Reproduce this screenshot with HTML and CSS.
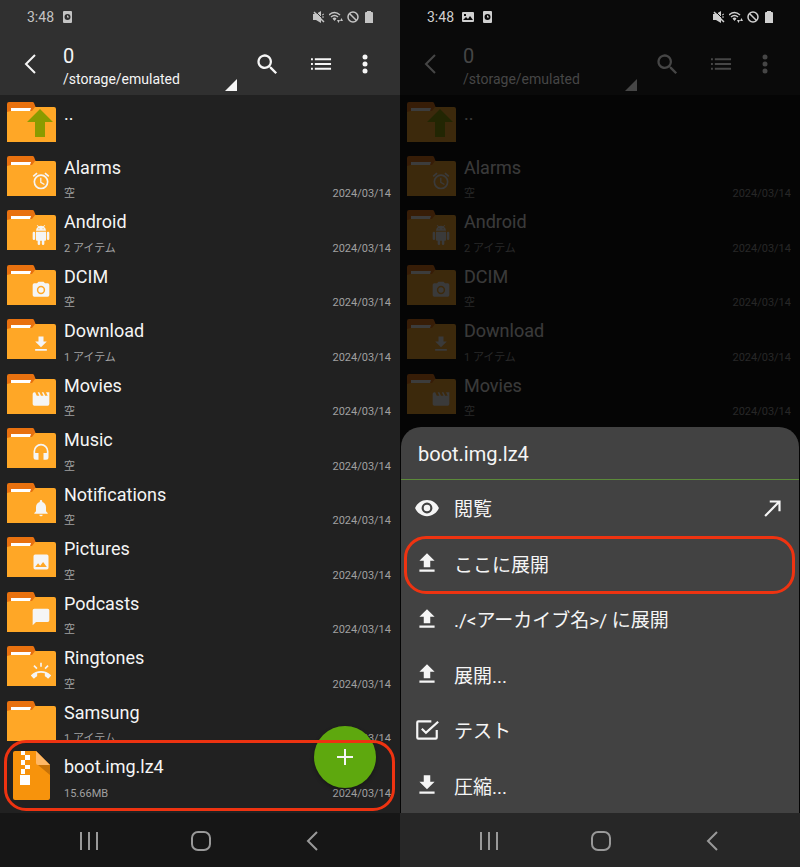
FILE: index.html
```html
<!DOCTYPE html>
<html lang="ja">
<head>
  <meta charset="UTF-8">
  <meta name="viewport" content="width=device-width, initial-scale=1.0">
  <title>boot.img.lz4</title>
  <link rel="stylesheet" href="styles.css">
</head>
<body>
  <!-- shared icons -->
  <svg class="sprite" aria-hidden="true">
    <symbol id="folder" viewBox="0 0 49 40">
      <path fill="#e8710f" d="M2 0h23a2 2 0 0 1 2 1l2 5v8H0V2a2 2 0 0 1 2-2z"/>
      <path fill="#ffa726" d="M0 10l4-1h21l3-4h19a2 2 0 0 1 2 2v33H0z"/>
      <path fill="#fff" d="M4 6h20l-1 3H4z"/>
    </symbol>
    <symbol id="zip" viewBox="0 0 37 49">
      <path fill="#f7930c" d="M2 0h21l14 14v33a2 2 0 0 1-2 2H2a2 2 0 0 1-2-2V2a2 2 0 0 1 2-2z"/>
      <path fill="#ffb866" d="M23 0l14 14H25a2 2 0 0 1-2-2z"/>
      <path fill="#c87308" d="M25 14h12v10z"/>
      <path fill="#fff" d="M8 0h4v4H8zM12 4h5v5h-5zM8 9h4v5H8zM12 14h5v4h-5zM8 18h4v5H8zM7 24h10v10H7z"/>
    </symbol>
    <symbol id="up" viewBox="0 0 26 28"><path fill="#8b9b00" d="M13 0l13 13h-8v15H8V13H0z"/></symbol>
    <symbol id="alarm" viewBox="0 0 24 24"><path d="M22 5.700l-4.600-3.900-1.300 1.500 4.600 3.900L22 5.700zM7.900 3.400L6.600 1.900 2 5.700l1.300 1.500 4.600-3.800zM12.500 8H11v6l4.700 2.900.8-1.200-4-2.400V8zM12 4a9 9 0 1 0 0 18 9 9 0 0 0 0-18zm0 16a7 7 0 1 1 0-14 7 7 0 0 1 0 14z"/></symbol>
    <symbol id="android" viewBox="0 0 24 24"><path d="M6 18c0 .55.450 1 1 1h1v3.500a1.500 1.500 0 0 0 3 0V19h2v3.500a1.500 1.500 0 0 0 3 0V19h1c.55 0 1-.45 1-1V8H6v10zM3.500 8A1.500 1.500 0 0 0 2 9.500v7a1.500 1.500 0 0 0 3 0v-7A1.500 1.500 0 0 0 3.500 8zm17 0A1.500 1.500 0 0 0 19 9.500v7a1.500 1.500 0 0 0 3 0v-7A1.500 1.500 0 0 0 20.500 8zm-4.970-5.840l1.300-1.300a.5.5 0 0 0-.7-.7l-1.480 1.480A5.900 5.900 0 0 0 12 1c-.96 0-1.860.23-2.660.63L7.850.15a.5.5 0 0 0-.7.7l1.310 1.310A6 6 0 0 0 6 7h12a6 6 0 0 0-2.470-4.840zM10 5H9V4h1v1zm5 0h-1V4h1v1z"/></symbol>
    <symbol id="camera" viewBox="0 0 24 24"><circle cx="12" cy="12" r="3.200"/><path d="M9 2L7.170 4H4a2 2 0 0 0-2 2v12a2 2 0 0 0 2 2h16a2 2 0 0 0 2-2V6a2 2 0 0 0-2-2h-3.170L15 2H9zm3 15a5 5 0 1 1 0-10 5 5 0 0 1 0 10z"/></symbol>
    <symbol id="download" viewBox="0 0 24 24"><path d="M19 9h-4V3H9v6H5l7 7 7-7zM5 18v2h14v-2H5z"/></symbol>
    <symbol id="upload" viewBox="0 0 24 24"><path d="M9 16h6v-6h4l-7-7-7 7h4v6zm-4 2h14v2H5v-2z"/></symbol>
    <symbol id="movie" viewBox="0 0 24 24"><path d="M18 4l2 4h-3l-2-4h-2l2 4h-3l-2-4H8l2 4H7L5 4H4a2 2 0 0 0-2 2v12a2 2 0 0 0 2 2h16a2 2 0 0 0 2-2V4h-4z"/></symbol>
    <symbol id="headset" viewBox="0 0 24 24"><path d="M12 1a9 9 0 0 0-9 9v7a3 3 0 0 0 3 3h3v-8H5v-2a7 7 0 0 1 14 0v2h-4v8h3a3 3 0 0 0 3-3v-7a9 9 0 0 0-9-9z"/></symbol>
    <symbol id="bell" viewBox="0 0 24 24"><path d="M12 22a2 2 0 0 0 2-2h-4a2 2 0 0 0 2 2zm6-6v-5c0-3.070-1.640-5.640-4.500-6.320V4a1.500 1.500 0 0 0-3 0v.68C7.630 5.360 6 7.920 6 11v5l-2 2v1h16v-1l-2-2z"/></symbol>
    <symbol id="image" viewBox="0 0 24 24"><path d="M21 19V5a2 2 0 0 0-2-2H5a2 2 0 0 0-2 2v14a2 2 0 0 0 2 2h14a2 2 0 0 0 2-2zM8.500 13.500l2.500 3 3.500-4.500 4.500 6H5l3.500-4.500z"/></symbol>
    <symbol id="chat" viewBox="0 0 24 24"><path d="M20 2H4a2 2 0 0 0-2 2v18l4-4h14a2 2 0 0 0 2-2V4a2 2 0 0 0-2-2z"/></symbol>
    <symbol id="ring" viewBox="0 0 24 24"><path d="M23.710 16.670A16.970 16.970 0 0 0 12 12C7.460 12 3.340 13.780.29 16.670a1 1 0 0 0 0 1.410l2.480 2.480c.39.390 1 .39 1.400 0a11 11 0 0 1 2.660-1.850c.33-.16.560-.5.560-.9v-3.100a15 15 0 0 1 9.220 0v3.100c0 .39.230.74.560.9.980.49 1.870 1.120 2.660 1.850.4.390 1.010.39 1.400 0l2.480-2.480a1 1 0 0 0 0-1.410zM21.160 6.260l-1.410-1.410-3.560 3.550 1.410 1.410 3.560-3.550zM13 2h-2v5h2V2zM6.400 9.810L7.810 8.400 4.260 4.840 2.840 6.260 6.400 9.810z"/></symbol>
    <symbol id="eye" viewBox="0 0 24 24"><path d="M12 4.500C7 4.500 2.730 7.610 1 12c1.730 4.390 6 7.500 11 7.500s9.270-3.110 11-7.500c-1.730-4.390-6-7.500-11-7.500zM12 17a5 5 0 1 1 0-10 5 5 0 0 1 0 10zm0-8a3 3 0 1 0 0 6 3 3 0 0 0 0-6z"/></symbol>
    <symbol id="open" viewBox="0 0 24 24"><path d="M9 5v2h6.590L4 18.590 5.410 20 17 8.410V15h2V5z"/></symbol>
    <symbol id="test" viewBox="0 0 24 24"><path d="M20 12v7H4V5h12V3H4a2 2 0 0 0-2 2v14a2 2 0 0 0 2 2h16a2 2 0 0 0 2-2v-7zM7.900 10.100l-1.400 1.400 4.500 4.500L23 5l-1.400-1.400L11 13.200z"/></symbol>
    <symbol id="back" viewBox="0 0 24 24"><path class="line" d="M16 3L7 12l9 9"/></symbol>
    <symbol id="search" viewBox="0 0 24 24"><path d="M15.500 14h-.79l-.28-.27a6.500 6.500 0 1 0-.7.7l.27.280v.79l5 4.990L20.490 19l-4.990-5zm-6 0a4.500 4.500 0 1 1 0-9 4.500 4.500 0 0 1 0 9z"/></symbol>
    <symbol id="list" viewBox="0 0 22 14"><path d="M0 1h2v2H0zM0 6h2v2H0zM0 11h2v2H0zM4 1h17v2H4zM4 6h17v2H4zM4 11h17v2H4z"/></symbol>
    <symbol id="more" viewBox="0 0 6 20"><circle cx="3" cy="3" r="2.500"/><circle cx="3" cy="10" r="2.500"/><circle cx="3" cy="17" r="2.500"/></symbol>
    <symbol id="corner" viewBox="0 0 12 12"><path d="M12 0v12H0z"/></symbol>
    <symbol id="badge" viewBox="0 0 12 12"><path fill-rule="evenodd" d="M2 0h7a1 1 0 0 1 1 1v10a1 1 0 0 1-1 1H2a1 1 0 0 1-1-1V1a1 1 0 0 1 1-1zM5.500 3a3 3 0 1 0 0 6 3 3 0 0 0 0-6zM5 4.500h1v1h1v1H5z"/></symbol>
    <symbol id="photo" viewBox="0 0 12 12"><path fill-rule="evenodd" d="M1 1h10a1 1 0 0 1 1 1v8a1 1 0 0 1-1 1H1a1 1 0 0 1-1-1V2a1 1 0 0 1 1-1zM1 9h10L8 5 6 8 4 6zM2 3v2h2V3z"/></symbol>
    <symbol id="mute" viewBox="0 0 12 12"><path d="M0 3h3l5-3v12L3 9H0z"/><path class="cut" d="M2 0l11 11"/><path class="mid" d="M1 1l10 10"/><path class="thin" d="M9 4l2-1M9 6h2"/></symbol>
    <symbol id="wifi" viewBox="0 0 14 12"><path class="mid" d="M0 4q5.500-5 11 0M2 6q3.500-3 7 0M4 8q1.500-1.500 3 0"/><path d="M4 8h3L5.500 10zM8 9h3l-1.500 3zM11 10h3l-1.500-3z"/></symbol>
    <symbol id="block" viewBox="0 0 12 12"><circle class="mid" cx="6" cy="6" r="5"/><path class="mid" d="M2.500 2.500l7 7"/></symbol>
    <symbol id="battery" viewBox="0 0 8 12"><path d="M2 0h4v1h1a1 1 0 0 1 1 1v10H0V2a1 1 0 0 1 1-1h1z"/></symbol>
    <symbol id="recents" viewBox="0 0 20 20"><path class="line" d="M2 1v18M10 1v18M18 1v18"/></symbol>
    <symbol id="home" viewBox="0 0 20 20"><rect class="line" x="1" y="1" width="18" height="18" rx="6"/></symbol>
    <symbol id="navback" viewBox="0 0 20 20"><path class="line" d="M14 1L5 10l9 9"/></symbol>
  </svg>

  <main class="screens">
    <section class="phone">
      <div class="status">
        <span>3:48</span>
        <svg class="status-icon"><use href="#badge"/></svg>
        <div class="status-right">
          <svg class="status-icon"><use href="#mute"/></svg>
          <svg class="status-icon wide"><use href="#wifi"/></svg>
          <svg class="status-icon"><use href="#block"/></svg>
          <svg class="status-icon"><use href="#battery"/></svg>
        </div>
      </div>
      <header class="toolbar">
        <button class="tool back" aria-label="戻る"><svg><use href="#back"/></svg></button>
        <div class="path">
          <h1>0</h1>
          <p>/storage/emulated</p>
        </div>
        <svg class="corner"><use href="#corner"/></svg>
        <button class="tool search" aria-label="検索"><svg><use href="#search"/></svg></button>
        <button class="tool list" aria-label="表示"><svg><use href="#list"/></svg></button>
        <button class="tool more" aria-label="メニュー"><svg><use href="#more"/></svg></button>
      </header>
      <ul class="files">
        <li class="file"><span class="icon"><svg><use href="#folder"/></svg><svg class="up"><use href="#up"/></svg></span><span class="name">..</span></li>
        <li class="file"><span class="icon"><svg><use href="#folder"/></svg><svg class="mark"><use href="#alarm"/></svg></span><span class="name">Alarms</span><span class="info">空</span><time>2024/03/14</time></li>
        <li class="file"><span class="icon"><svg><use href="#folder"/></svg><svg class="mark"><use href="#android"/></svg></span><span class="name">Android</span><span class="info">2 アイテム</span><time>2024/03/14</time></li>
        <li class="file"><span class="icon"><svg><use href="#folder"/></svg><svg class="mark"><use href="#camera"/></svg></span><span class="name">DCIM</span><span class="info">空</span><time>2024/03/14</time></li>
        <li class="file"><span class="icon"><svg><use href="#folder"/></svg><svg class="mark"><use href="#download"/></svg></span><span class="name">Download</span><span class="info">1 アイテム</span><time>2024/03/14</time></li>
        <li class="file"><span class="icon"><svg><use href="#folder"/></svg><svg class="mark"><use href="#movie"/></svg></span><span class="name">Movies</span><span class="info">空</span><time>2024/03/14</time></li>
        <li class="file"><span class="icon"><svg><use href="#folder"/></svg><svg class="mark"><use href="#headset"/></svg></span><span class="name">Music</span><span class="info">空</span><time>2024/03/14</time></li>
        <li class="file"><span class="icon"><svg><use href="#folder"/></svg><svg class="mark"><use href="#bell"/></svg></span><span class="name">Notifications</span><span class="info">空</span><time>2024/03/14</time></li>
        <li class="file"><span class="icon"><svg><use href="#folder"/></svg><svg class="mark"><use href="#image"/></svg></span><span class="name">Pictures</span><span class="info">空</span><time>2024/03/14</time></li>
        <li class="file"><span class="icon"><svg><use href="#folder"/></svg><svg class="mark"><use href="#chat"/></svg></span><span class="name">Podcasts</span><span class="info">空</span><time>2024/03/14</time></li>
        <li class="file"><span class="icon"><svg><use href="#folder"/></svg><svg class="mark"><use href="#ring"/></svg></span><span class="name">Ringtones</span><span class="info">空</span><time>2024/03/14</time></li>
        <li class="file"><span class="icon"><svg><use href="#folder"/></svg></span><span class="name">Samsung</span><span class="info">1 アイテム</span><time>2024/03/14</time></li>
        <li class="file selected"><span class="icon"><svg class="zip"><use href="#zip"/></svg></span><span class="name">boot.img.lz4</span><span class="info">15.66MB</span><time>2024/03/14</time></li>
      </ul>
      <button class="fab" aria-label="追加"><svg viewBox="0 0 16 16"><path d="M7 0h2v7h7v2H9v7H7V9H0V7h7z"/></svg></button>
      <nav class="navbar">
        <button aria-label="履歴"><svg><use href="#recents"/></svg></button>
        <button aria-label="ホーム"><svg><use href="#home"/></svg></button>
        <button aria-label="戻る"><svg><use href="#navback"/></svg></button>
      </nav>
    </section>

    <section class="phone dimmed">
      <div class="status">
        <span>3:48</span>
        <svg class="status-icon"><use href="#photo"/></svg>
        <svg class="status-icon"><use href="#badge"/></svg>
        <div class="status-right">
          <svg class="status-icon"><use href="#mute"/></svg>
          <svg class="status-icon wide"><use href="#wifi"/></svg>
          <svg class="status-icon"><use href="#block"/></svg>
          <svg class="status-icon"><use href="#battery"/></svg>
        </div>
      </div>
      <header class="toolbar">
        <button class="tool back" aria-label="戻る"><svg><use href="#back"/></svg></button>
        <div class="path">
          <h1>0</h1>
          <p>/storage/emulated</p>
        </div>
        <svg class="corner"><use href="#corner"/></svg>
        <button class="tool search" aria-label="検索"><svg><use href="#search"/></svg></button>
        <button class="tool list" aria-label="表示"><svg><use href="#list"/></svg></button>
        <button class="tool more" aria-label="メニュー"><svg><use href="#more"/></svg></button>
      </header>
      <ul class="files">
        <li class="file"><span class="icon"><svg><use href="#folder"/></svg><svg class="up"><use href="#up"/></svg></span><span class="name">..</span></li>
        <li class="file"><span class="icon"><svg><use href="#folder"/></svg><svg class="mark"><use href="#alarm"/></svg></span><span class="name">Alarms</span><span class="info">空</span><time>2024/03/14</time></li>
        <li class="file"><span class="icon"><svg><use href="#folder"/></svg><svg class="mark"><use href="#android"/></svg></span><span class="name">Android</span><span class="info">2 アイテム</span><time>2024/03/14</time></li>
        <li class="file"><span class="icon"><svg><use href="#folder"/></svg><svg class="mark"><use href="#camera"/></svg></span><span class="name">DCIM</span><span class="info">空</span><time>2024/03/14</time></li>
        <li class="file"><span class="icon"><svg><use href="#folder"/></svg><svg class="mark"><use href="#download"/></svg></span><span class="name">Download</span><span class="info">1 アイテム</span><time>2024/03/14</time></li>
        <li class="file"><span class="icon"><svg><use href="#folder"/></svg><svg class="mark"><use href="#movie"/></svg></span><span class="name">Movies</span><span class="info">空</span><time>2024/03/14</time></li>
      </ul>
      <div class="sheet">
        <h2>boot.img.lz4</h2>
        <button class="action"><svg><use href="#eye"/></svg>閲覧<svg class="open"><use href="#open"/></svg></button>
        <button class="action picked"><svg><use href="#upload"/></svg>ここに展開</button>
        <button class="action"><svg><use href="#upload"/></svg>./&lt;アーカイブ名&gt;/ に展開</button>
        <button class="action"><svg><use href="#upload"/></svg>展開...</button>
        <button class="action"><svg><use href="#test"/></svg>テスト</button>
        <button class="action"><svg><use href="#download"/></svg>圧縮...</button>
      </div>
      <nav class="navbar">
        <button aria-label="履歴"><svg><use href="#recents"/></svg></button>
        <button aria-label="ホーム"><svg><use href="#home"/></svg></button>
        <button aria-label="戻る"><svg><use href="#navback"/></svg></button>
      </nav>
    </section>
  </main>
</body>
</html>
```
FILE: styles.css
```css
* {
  box-sizing: border-box;
}

body {
  margin: 0;
  background: #000;
  font-family: Roboto, "Noto Sans CJK JP", sans-serif;
  color: #f5f5f5;
}

h1,
h2,
p,
ul {
  margin: 0;
  padding: 0;
  font-weight: 400;
}

button {
  padding: 0;
  border: none;
  background: none;
  color: inherit;
  font: inherit;
  cursor: pointer;
}

svg {
  display: block;
  fill: currentColor;
}

.sprite {
  position: absolute;
  width: 0;
  height: 0;
}

.line,
.mid,
.thin,
.cut {
  fill: none;
  stroke: currentColor;
  stroke-width: 2;
}

.mid {
  stroke-width: 1.5;
}

.thin {
  stroke-width: 1;
}

.cut {
  stroke: var(--bar);
  stroke-width: 1;
}

.screens {
  display: grid;
  grid-template-columns: 1fr 1fr;
  min-height: 100vh;
}

.phone {
  --bar: #303030;
  position: relative;
  display: flex;
  flex-direction: column;
  background: #212121;
}

/* status bar */
.status {
  display: flex;
  align-items: center;
  gap: 8px;
  height: 33px;
  padding: 0 25px 0 27px;
  background: var(--bar);
  color: #c4c4c4;
  font-size: 14px;
}

.status-right {
  display: flex;
  gap: 4px;
  margin-left: auto;
}

.status-icon {
  width: 12px;
  height: 12px;
}

.status-icon.wide {
  width: 14px;
}

/* toolbar */
.toolbar {
  display: flex;
  align-items: center;
  height: 62px;
  padding: 0 32px 0 19px;
  background: var(--bar);
}

.tool svg {
  width: 24px;
  height: 24px;
}

.path {
  flex: 1;
  padding: 3px 0 0 20px;
}

.path h1 {
  font-size: 20px;
  line-height: 26px;
}

.path p {
  font-size: 14px;
  line-height: 20px;
}

.corner {
  align-self: flex-end;
  width: 12px;
  height: 12px;
  margin-bottom: 4px;
}

.search {
  margin-left: 17px;
}

.search svg {
  width: 27px;
  height: 27px;
}

.list {
  margin-left: 30px;
}

.list svg {
  width: 21px;
  height: 14px;
}

.more {
  margin-left: 30px;
}

.more svg {
  width: 6px;
  height: 20px;
}

/* file list */
.files {
  flex: 1;
  display: grid;
  grid-template-rows: repeat(13, 1fr);
  padding-bottom: 10px;
  list-style: none;
}

.file {
  display: grid;
  grid-template-columns: 49px 1fr auto;
  grid-template-rows: 35px 18px;
  column-gap: 8px;
  align-items: center;
  padding: 1px 9px 0 7px;
}

.icon {
  position: relative;
  grid-row: 1 / 3;
  display: flex;
  justify-content: center;
  padding-bottom: 2px;
}

.icon svg {
  width: 49px;
  height: 40px;
}

.icon .mark {
  position: absolute;
  right: 5px;
  bottom: 7px;
  width: 20px;
  height: 20px;
}

.icon .up {
  position: absolute;
  right: 3px;
  bottom: 7px;
  width: 26px;
  height: 28px;
}

.icon .zip {
  width: 37px;
  height: 49px;
}

.name {
  grid-column: 2 / 4;
  font-size: 18px;
  line-height: 24px;
}

.info,
time {
  color: #a0a0a0;
  font-size: 11px;
  line-height: 16px;
}

.selected {
  position: relative;
  background: #212121;
  box-shadow: 0 -8px #212121;
}

.selected::after,
.picked::after {
  content: "";
  position: absolute;
  z-index: 2;
  inset: -9px 5px -8px 4px;
  border: 3px solid #ee3311;
  border-radius: 22px;
  pointer-events: none;
}

.fab {
  position: absolute;
  z-index: 1;
  right: 24px;
  bottom: 79px;
  display: grid;
  place-items: center;
  width: 62px;
  height: 62px;
  border-radius: 50%;
  background: #5ea80e;
  box-shadow: 0 2px 4px rgba(0, 0, 0, 0.3);
}

.fab svg {
  width: 16px;
  height: 16px;
}

/* bottom buttons */
.navbar {
  display: flex;
  justify-content: space-between;
  align-items: center;
  height: 54px;
  padding: 2px 77px 0 79px;
  background: #161616;
  color: #999;
}

.navbar svg {
  width: 20px;
  height: 20px;
}

/* second screen */
.dimmed {
  --bar: #0a0a0a;
  background: #050505;
}

.dimmed .status {
  color: #d0d0d0;
}

.dimmed .toolbar {
  color: #464646;
}

.dimmed .files {
  opacity: .22;
}

.dimmed .navbar {
  background: #272727;
}

.sheet {
  position: absolute;
  right: 1px;
  bottom: 54px;
  left: 1px;
  display: grid;
  grid-template-rows: 53px repeat(6, 1fr);
  height: 386px;
  border-radius: 20px 20px 0 0;
  background: #424242;
}

.sheet h2 {
  padding: 12px 17px 0;
  border-bottom: 1px solid #5c8a3a;
  font-size: 20px;
  line-height: 30px;
}

.action {
  position: relative;
  display: flex;
  align-items: center;
  gap: 14px;
  padding: 0 13px;
  font-size: 19px;
  text-align: left;
}

.action svg {
  width: 26px;
  height: 26px;
}

.action .open {
  margin-left: auto;
}

.picked::after {
  inset: 0 4px -3px 3px;
}
```
